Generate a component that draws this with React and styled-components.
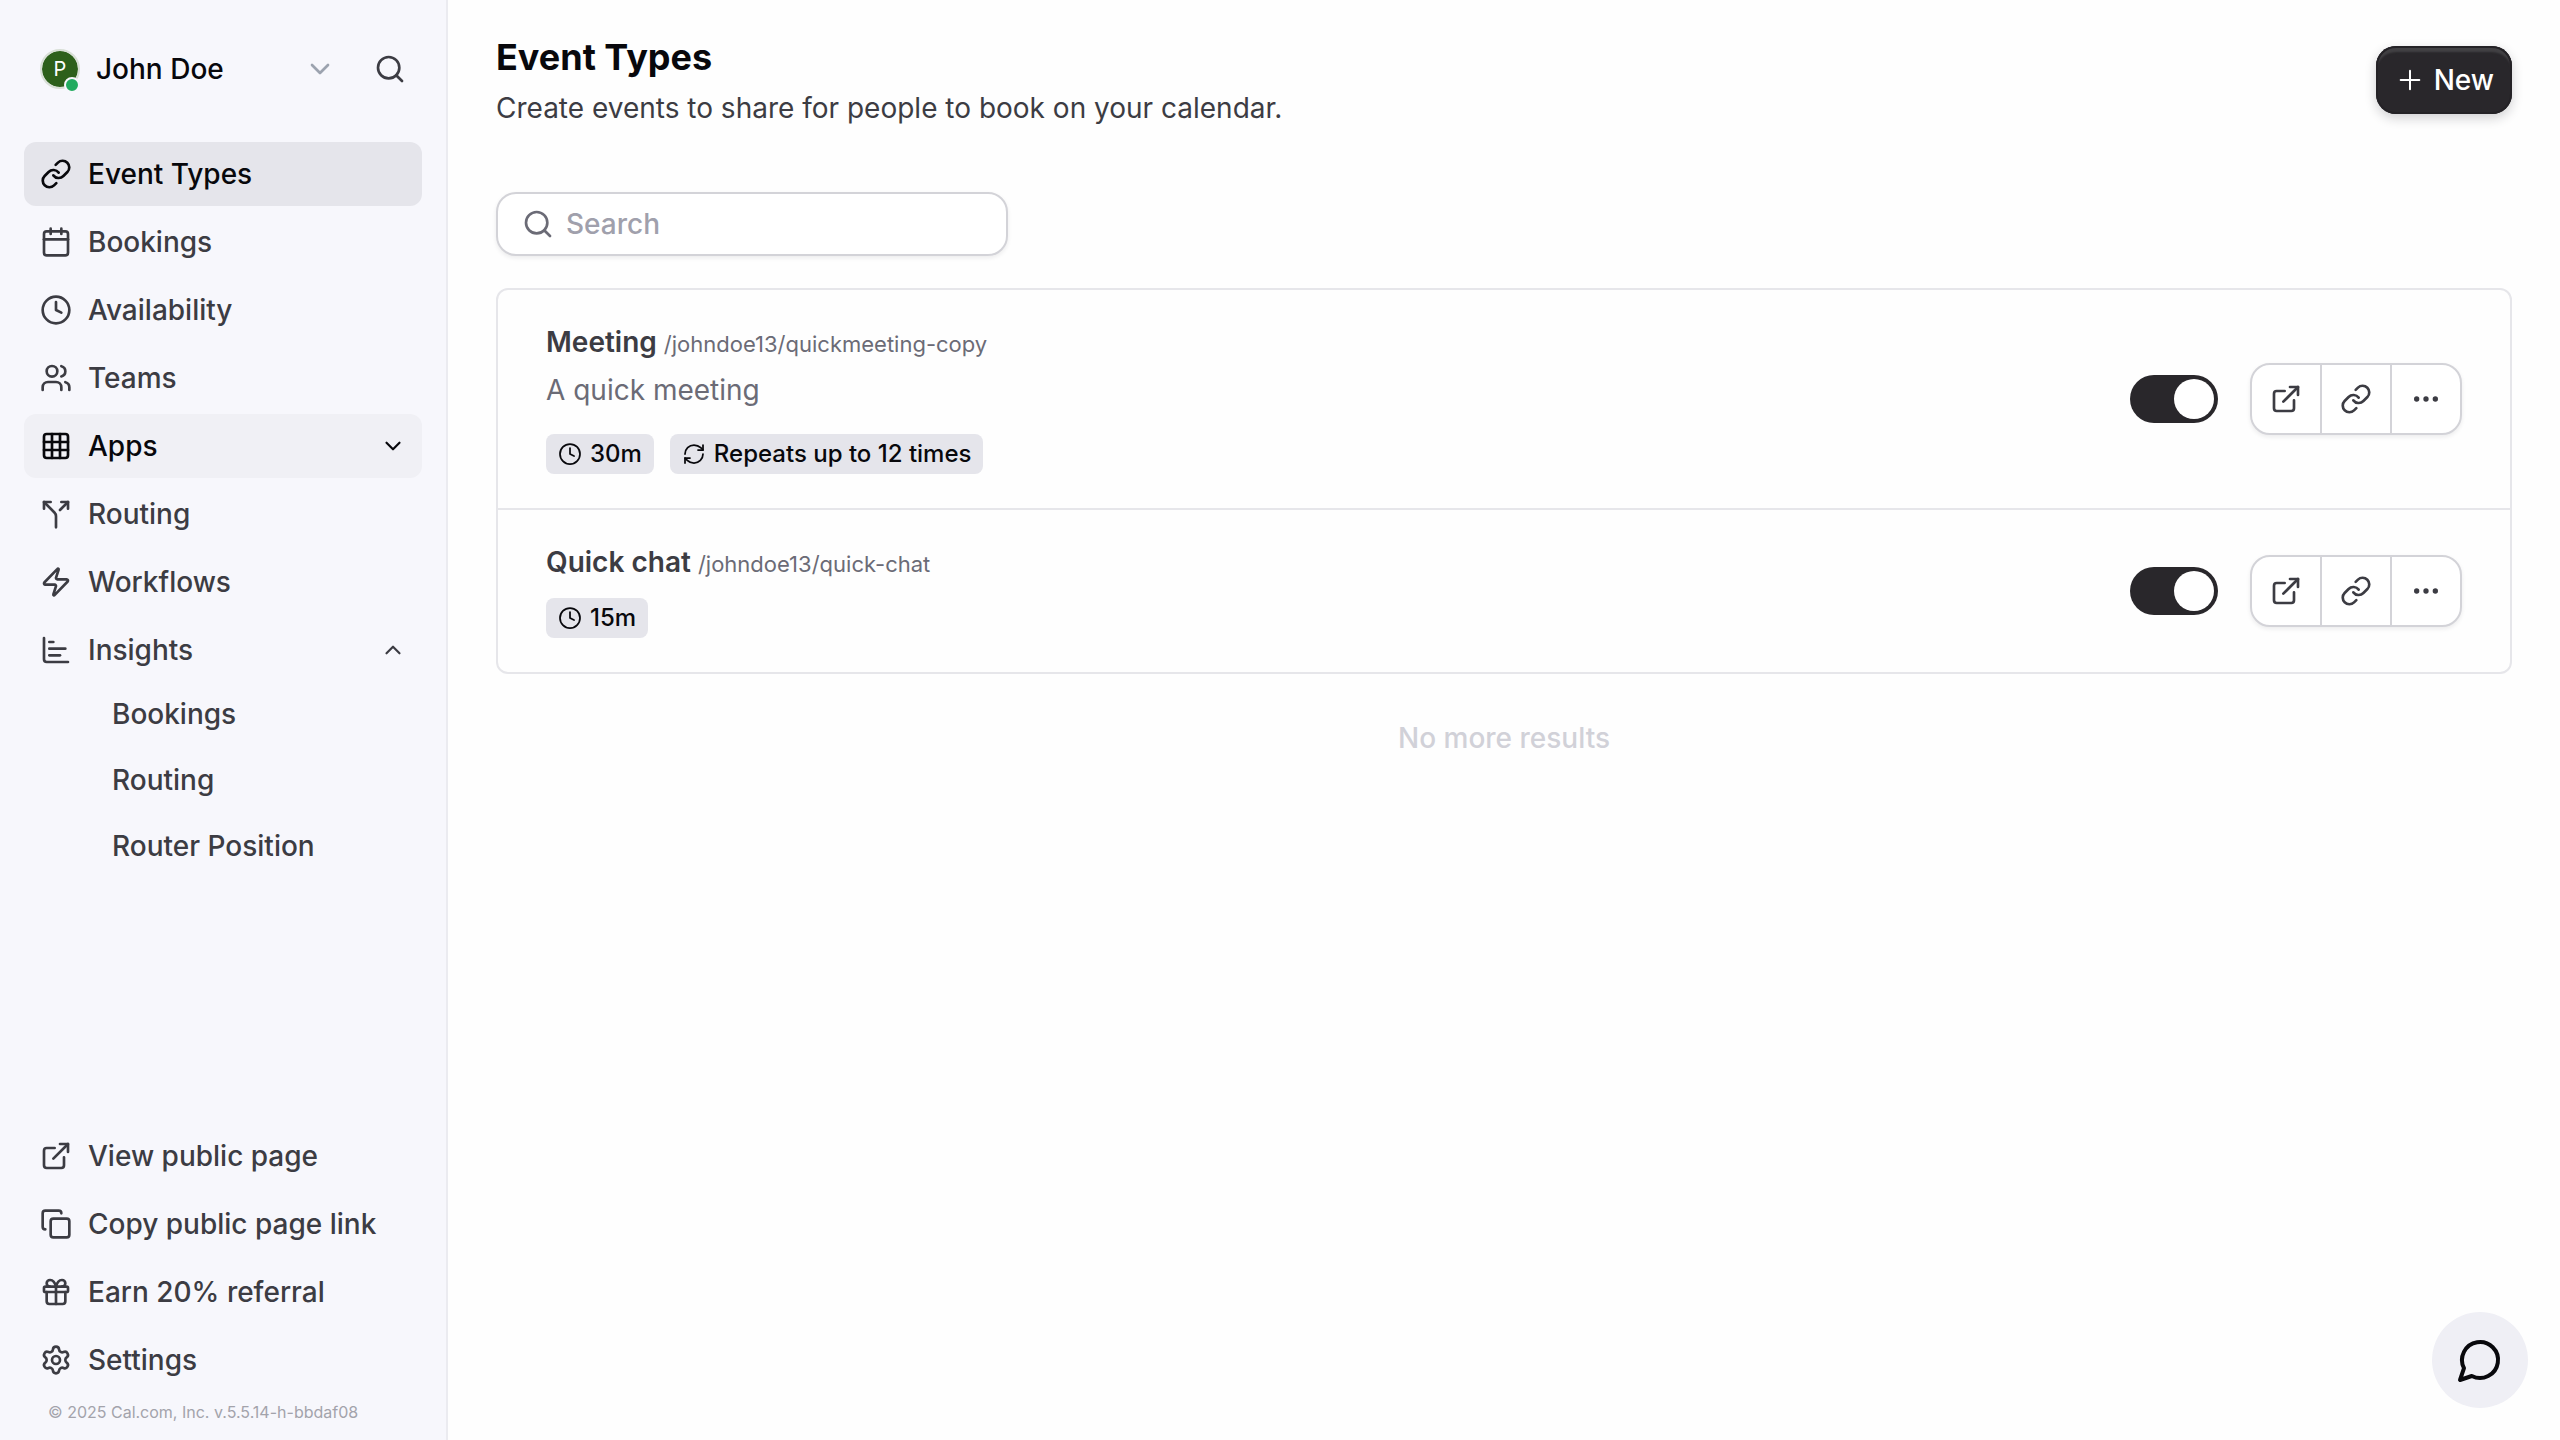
import styled, { createGlobalStyle, css } from 'styled-components'
import {
  Calendar,
  ChartBar,
  ChevronDown,
  ChevronUp,
  Clock,
  Copy,
  Ellipsis,
  ExternalLink,
  Gift,
  Grid3x3,
  Link,
  Plus,
  RefreshCw,
  Search,
  Settings,
  Split,
  Users,
  Zap,
} from 'lucide-react'

const mainLinks = [
  { label: 'Event Types', icon: Link, state: 'active' },
  { label: 'Bookings', icon: Calendar },
  { label: 'Availability', icon: Clock },
  { label: 'Teams', icon: Users },
  { label: 'Apps', icon: Grid3x3, state: 'hover', chevron: ChevronDown },
  { label: 'Routing', icon: Split },
  { label: 'Workflows', icon: Zap },
  { label: 'Insights', icon: ChartBar, chevron: ChevronUp },
]

const insightLinks = ['Bookings', 'Routing', 'Router Position']

const bottomLinks = [
  { label: 'View public page', icon: ExternalLink },
  { label: 'Copy public page link', icon: Copy },
  { label: 'Earn 20% referral', icon: Gift },
  { label: 'Settings', icon: Settings },
]

const eventTypes = [
  {
    title: 'Meeting',
    slug: '/johndoe13/quickmeeting-copy',
    description: 'A quick meeting',
    badges: [
      { icon: Clock, text: '30m' },
      { icon: RefreshCw, text: 'Repeats up to 12 times' },
    ],
  },
  {
    title: 'Quick chat',
    slug: '/johndoe13/quick-chat',
    badges: [{ icon: Clock, text: '15m' }],
  },
]

const NavLink = ({ label, icon: Icon, state, chevron: Chevron }) => (
  <NavItem href="#" $state={state} aria-current={state === 'active' ? 'page' : undefined}>
    <Icon size={32} />
    <NavLabel>{label}</NavLabel>
    {Chevron && <Chevron size={26} />}
  </NavItem>
)

const EventRow = ({ event }) => (
  <Row>
    <RowInfo>
      <RowTitle href="#">
        {event.title} <Slug>{event.slug}</Slug>
      </RowTitle>
      {event.description && <Description>{event.description}</Description>}
      <Badges>
        {event.badges.map(({ icon: Icon, text }) => (
          <Badge key={text}>
            <Icon size={24} strokeWidth={1.75} />
            {text}
          </Badge>
        ))}
      </Badges>
    </RowInfo>
    <Switch type="checkbox" role="switch" defaultChecked aria-label={`Show ${event.title} on profile`} />
    <ButtonGroup>
      <GroupButton type="button" aria-label="Preview">
        <ExternalLink size={32} />
      </GroupButton>
      <GroupButton type="button" aria-label="Copy link to event">
        <Link size={32} />
      </GroupButton>
      <GroupButton type="button" aria-label="More options">
        <Ellipsis size={32} />
      </GroupButton>
    </ButtonGroup>
  </Row>
)

const App = () => {
  return (
    <>
      <GlobalStyle />
      <Shell>
        <Sidebar>
          <UserBar>
            <UserButton type="button">
              <Avatar>
                P
                <OnlineDot />
              </Avatar>
              <UserName>John Doe</UserName>
              <ChevronDown size={32} color="#9ca3af" />
            </UserButton>
            <IconButton type="button" aria-label="Search">
              <Search size={32} />
            </IconButton>
          </UserBar>

          <Nav aria-label="Main">
            {mainLinks.map((link) => (
              <NavLink key={link.label} {...link} />
            ))}
          </Nav>
          <SubNav aria-label="Insights">
            {insightLinks.map((label) => (
              <SubItem key={label} href="#">
                {label}
              </SubItem>
            ))}
          </SubNav>

          <BottomNav aria-label="Account">
            {bottomLinks.map((link) => (
              <NavLink key={link.label} {...link} />
            ))}
          </BottomNav>
          <Credits>© 2025 Cal.com, Inc. v.5.5.14-h-bbdaf08</Credits>
        </Sidebar>

        <Main>
          <PageHeader>
            <div>
              <Title>Event Types</Title>
              <Subtitle>Create events to share for people to book on your calendar.</Subtitle>
            </div>
            <NewButton type="button">
              <Plus size={32} strokeWidth={1.5} />
              New
            </NewButton>
          </PageHeader>

          <SearchBox>
            <Search size={32} />
            <SearchInput type="search" placeholder="Search" aria-label="Search event types" />
          </SearchBox>

          <List>
            {eventTypes.map((event) => (
              <EventRow key={event.slug} event={event} />
            ))}
          </List>
          <EndNote>No more results</EndNote>
        </Main>
      </Shell>

      <ChatButton type="button" aria-label="Open chat">
        <svg width="48" height="48" viewBox="0 0 24 24" fill="none" stroke="currentColor" strokeWidth="2" strokeLinecap="round" strokeLinejoin="round">
          <path d="M7.9 20A9 9 0 1 0 4 16.1L2 22Z" />
        </svg>
      </ChatButton>
    </>
  )
}

const GlobalStyle = createGlobalStyle`
  * {
    box-sizing: border-box;
  }

  body {
    margin: 0;
    background: #fefefe;
    color: #3c3c43;
    font-family: Inter, "Liberation Sans", sans-serif;
    font-size: 28px;
    line-height: 36px;
  }

  button, input {
    font: inherit;
    color: inherit;
  }

  button {
    border: none;
    background: none;
    padding: 0;
    cursor: pointer;
  }

  a {
    color: inherit;
    text-decoration: none;
  }

  svg {
    flex-shrink: 0;
  }
`

const Shell = styled.div`
  display: flex;
  min-height: 100vh;
`

const Sidebar = styled.aside`
  display: flex;
  flex-direction: column;
  flex-shrink: 0;
  width: 448px;
  padding: 36px 24px 10px;
  background: #f7f7fc;
  border-right: 2px solid #ebebf0;
  font-weight: 500;
`

const UserBar = styled.header`
  display: flex;
  align-items: center;
  height: 66px;
  padding: 0 16px;
`

const UserButton = styled.button`
  display: flex;
  flex: 1;
  align-items: center;
  gap: 16px;
  text-align: left;
  font-weight: 500;
  color: #08080c;
`

const Avatar = styled.span`
  position: relative;
  display: flex;
  align-items: center;
  justify-content: center;
  width: 40px;
  height: 40px;
  border-radius: 50%;
  border: 2px solid #d8dfd6;
  background: #2d601b;
  background-clip: padding-box;
  color: #fff;
  font-size: 20px;
  font-weight: 400;
`

const OnlineDot = styled.span`
  position: absolute;
  right: -2px;
  bottom: -6px;
  width: 16px;
  height: 16px;
  border: 2px solid #f7f7fc;
  border-radius: 50%;
  background: #22ab5f;
`

const UserName = styled.span`
  flex: 1;
`

const IconButton = styled.button`
  display: flex;
  margin-left: 38px;
`

const Nav = styled.nav`
  display: flex;
  flex-direction: column;
  gap: 4px;
  margin-top: 40px;
`

const navStates = {
  active: css`
    background: #e5e5eb;
    color: #08080c;
  `,
  hover: css`
    background: #f0f0f5;
    color: #08080c;
  `,
}

const NavItem = styled.a`
  display: flex;
  align-items: center;
  gap: 16px;
  height: 64px;
  padding: 0 16px;
  border-radius: 12px;
  ${({ $state }) => navStates[$state]}
`

const NavLabel = styled.span`
  flex: 1;
`

const SubNav = styled.nav`
  display: flex;
  flex-direction: column;
  gap: 2px;
`

const SubItem = styled.a`
  display: flex;
  align-items: center;
  height: 64px;
  padding-left: 88px;
`

const BottomNav = styled(Nav)`
  margin-top: auto;
`

const Credits = styled.small`
  margin: 2px 24px 0;
  color: #a3a3ab;
  font-size: 16px;
  font-weight: 400;
`

const Main = styled.main`
  flex: 1;
  min-width: 0;
  padding: 34px 48px;
`

const PageHeader = styled.header`
  display: flex;
  justify-content: space-between;
  align-items: center;
`

const Title = styled.h1`
  margin: 0;
  color: #08080c;
  font-size: 36px;
  font-weight: 700;
  line-height: 46px;
`

const Subtitle = styled.p`
  margin: 10px 0 0;
`

const NewButton = styled.button`
  display: flex;
  align-items: center;
  gap: 8px;
  height: 68px;
  padding: 0 18px;
  border-radius: 20px;
  background: #29272b;
  color: #fff;
  font-weight: 500;
  box-shadow:
    inset 0 0 0 2px #242226,
    inset 0 6px 2px #424144,
    0 4px 12px rgba(20, 20, 30, 0.2);
`

const SearchBox = styled.label`
  display: flex;
  align-items: center;
  gap: 12px;
  width: 512px;
  height: 64px;
  margin-top: 66px;
  padding: 0 24px;
  border: 2px solid #d3d3d8;
  border-radius: 20px;
  background: #fff;
  color: #6b6b76;
  box-shadow: 0 2px 4px rgba(20, 20, 40, 0.08);
`

const SearchInput = styled.input`
  flex: 1;
  min-width: 0;
  padding: 0;
  border: none;
  outline: none;
  background: none;
  font-weight: 500;

  &::placeholder {
    color: #a0a0ac;
    opacity: 1;
  }
`

const List = styled.ul`
  margin: 32px 0 0;
  padding: 0;
  list-style: none;
  border: 2px solid #e6e6ea;
  border-radius: 12px;
`

const Row = styled.li`
  display: flex;
  align-items: center;
  gap: 32px;
  padding: 34px 48px;

  & + & {
    border-top: 2px solid #e6e6ea;
  }
`

const RowInfo = styled.div`
  flex: 1;
  min-width: 0;
`

const RowTitle = styled.a`
  display: block;
  height: 36px;
  font-weight: 600;
`

const Slug = styled.small`
  color: #6b6b76;
  font-size: 22px;
  font-weight: 400;
`

const Description = styled.p`
  margin: 10px 0 24px;
  color: #6b6b76;
  line-height: 40px;
`

const Badges = styled.div`
  display: flex;
  gap: 16px;
  margin-top: 18px;
`

const Badge = styled.span`
  display: flex;
  align-items: center;
  gap: 8px;
  height: 40px;
  padding: 0 12px;
  border-radius: 8px;
  background: #e5e5eb;
  color: #08080c;
  font-size: 24px;
  font-weight: 500;
`

const Switch = styled.input`
  appearance: none;
  display: flex;
  width: 88px;
  height: 48px;
  margin: 0;
  padding: 4px;
  border-radius: 24px;
  background: #d3d3d8;
  cursor: pointer;

  &::before {
    content: '';
    width: 40px;
    height: 40px;
    border-radius: 50%;
    background: #fff;
  }

  &:checked {
    justify-content: flex-end;
    background: #29272b;
  }
`

const ButtonGroup = styled.div`
  display: flex;
  border: 2px solid #d3d3d8;
  border-radius: 20px;
  background: #fff;
  box-shadow: 0 2px 4px rgba(20, 20, 40, 0.08);
`

const GroupButton = styled.button`
  display: flex;
  align-items: center;
  justify-content: center;
  width: 68px;
  height: 68px;

  & + & {
    width: 70px;
    border-left: 2px solid #d3d3d8;
  }
`

const EndNote = styled.p`
  margin: 46px 0 0;
  text-align: center;
  color: #d1d1d8;
  font-weight: 500;
`

const ChatButton = styled.button`
  position: fixed;
  right: 32px;
  bottom: 32px;
  display: flex;
  align-items: center;
  justify-content: center;
  width: 96px;
  height: 96px;
  border-radius: 50%;
  background: #efeff5;
  color: #08080c;
`

export default App
